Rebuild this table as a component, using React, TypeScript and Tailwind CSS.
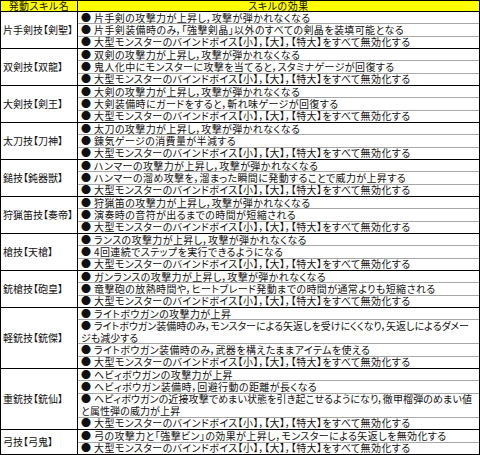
const BIND = '大型モンスターのバインドボイス【小】，【大】，【特大】をすべて無効化する';

type Item = { text: string[]; grow: string; track: string };
type Group = { name: string; grow: string; items: Item[] };

const one = (t: string): Item => ({ text: [t], grow: 'flex-[1]', track: 'tracking-[0.4px]' });

const groups: Group[] = [
  {
    name: '片手剣技【剣聖】',
    grow: 'flex-[3]',
    items: [
      one('片手剣の攻撃力が上昇し，攻撃が弾かれなくなる'),
      one('片手剣装備時のみ，「強撃剣晶」以外のすべての剣晶を装填可能となる'),
      one(BIND),
    ],
  },
  {
    name: '双剣技【双龍】',
    grow: 'flex-[3]',
    items: [
      one('双剣の攻撃力が上昇し，攻撃が弾かれなくなる'),
      one('鬼人化中にモンスターに攻撃を当てると，スタミナゲージが回復する'),
      one(BIND),
    ],
  },
  {
    name: '大剣技【剣王】',
    grow: 'flex-[3]',
    items: [
      one('大剣の攻撃力が上昇し，攻撃が弾かれなくなる'),
      one('大剣装備時にガードをすると，斬れ味ゲージが回復する'),
      one(BIND),
    ],
  },
  {
    name: '太刀技【刀神】',
    grow: 'flex-[3]',
    items: [
      one('太刀の攻撃力が上昇し，攻撃が弾かれなくなる'),
      one('錬気ゲージの消費量が半減する'),
      one(BIND),
    ],
  },
  {
    name: '鎚技【鈍器獣】',
    grow: 'flex-[3]',
    items: [
      one('ハンマーの攻撃力が上昇し，攻撃が弾かれなくなる'),
      one('ハンマーの溜め攻撃を，溜まった瞬間に発動することで威力が上昇する'),
      one(BIND),
    ],
  },
  {
    name: '狩猟笛技【奏帝】',
    grow: 'flex-[3]',
    items: [
      one('狩猟笛の攻撃力が上昇し，攻撃が弾かれなくなる'),
      one('演奏時の音符が出るまでの時間が短縮される'),
      one(BIND),
    ],
  },
  {
    name: '槍技【天槍】',
    grow: 'flex-[3]',
    items: [
      one('ランスの攻撃力が上昇し，攻撃が弾かれなくなる'),
      one('4回連続でステップを実行できるようになる'),
      one(BIND),
    ],
  },
  {
    name: '銃槍技【砲皇】',
    grow: 'flex-[3]',
    items: [
      one('ガンランスの攻撃力が上昇し，攻撃が弾かれなくなる'),
      one('竜撃砲の放熱時間や，ヒートブレード発動までの時間が通常よりも短縮される'),
      one(BIND),
    ],
  },
  {
    name: '軽銃技【銃傑】',
    grow: 'flex-[5]',
    items: [
      one('ライトボウガンの攻撃力が上昇'),
      {
        text: [
          'ライトボウガン装備時のみ，モンスターによる矢返しを受けにくくなり，矢返しによるダメー',
          'ジも減少する',
        ],
        grow: 'flex-[2]',
        track: 'tracking-[0px]',
      },
      one('ライトボウガン装備時のみ，武器を構えたままアイテムを使える'),
      one(BIND),
    ],
  },
  {
    name: '重銃技【銃仙】',
    grow: 'flex-[5]',
    items: [
      one('ヘビィボウガンの攻撃力が上昇'),
      one('ヘビィボウガン装備時，回避行動の距離が長くなる'),
      {
        text: [
          'ヘビィボウガンの近接攻撃でめまい状態を引き起こせるようになり，徹甲榴弾のめまい値',
          'と属性弾の威力が上昇',
        ],
        grow: 'flex-[2]',
        track: 'tracking-[0.1px]',
      },
      one(BIND),
    ],
  },
  {
    name: '弓技【弓鬼】',
    grow: 'flex-[2]',
    items: [
      one('弓の攻撃力と「強撃ビン」の効果が上昇し，モンスターによる矢返しを無効化する'),
      one(BIND),
    ],
  },
];

export default function App() {
  return (
    <div className="w-[480px] h-[455px] bg-white border border-black flex flex-col text-[10px] leading-[12px] text-[#111] font-['Noto_Sans_CJK_JP','Noto_Sans_CJK_SC',sans-serif] [font-feature-settings:'palt'] overflow-hidden">
      {/* header row */}
      <div className="flex h-[11px] shrink-0 bg-[#ffff00] border-b border-black leading-[10px]">
        <div className="w-[77px] shrink-0 border-r border-black flex items-center justify-center tracking-[0.5px]">発動スキル名</div>
        <div className="flex-1 flex items-center justify-center tracking-[0.5px]">スキルの効果</div>
      </div>

      {groups.map((g, gi) => (
        <div
          key={g.name}
          className={`flex min-h-0 ${g.grow} ${gi < groups.length - 1 ? 'border-b border-black' : ''}`}
        >
          <div className="w-[77px] shrink-0 border-r border-black flex items-center pl-[2px] whitespace-nowrap">
            {g.name}
          </div>
          <div className="flex-1 flex flex-col min-w-0 divide-y divide-[#a8a8a8]">
            {g.items.map((it, ii) => (
              <div
                key={ii}
                className={`${it.grow} ${it.track} min-h-0 flex flex-col justify-center pl-[3px] whitespace-nowrap`}
              >
                {it.text.map((line, li) => (
                  <div key={li}>
                    {li === 0 && <span className="mr-[3px] tracking-normal">●</span>}
                    {line}
                  </div>
                ))}
              </div>
            ))}
          </div>
        </div>
      ))}
    </div>
  );
}
